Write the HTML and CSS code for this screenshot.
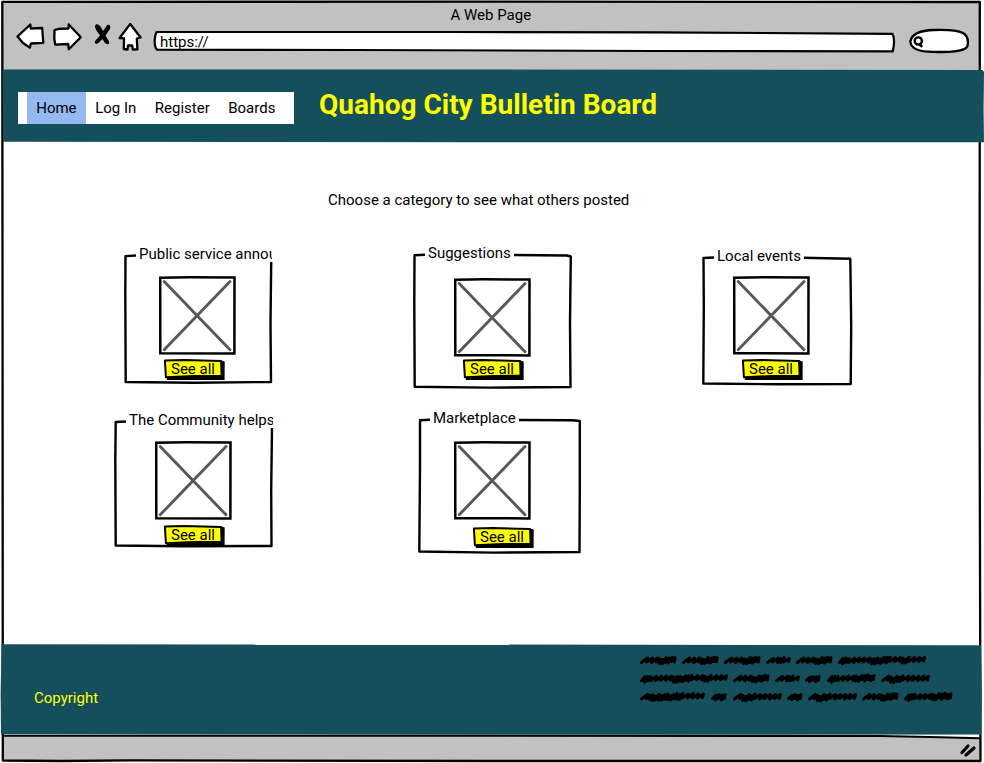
FILE: index.html
```html
<!DOCTYPE html>
<html lang="en">
<head>
<meta charset="utf-8">
<title>A Web Page</title>
<link rel="stylesheet" href="styles.css">
</head>
<body>
<svg class="defs" width="0" height="0">
  <defs>
    <symbol id="picture" viewBox="0 0 77 79">
      <path d="M1.200 1.800 30 1.300 75.500 1.500 75.400 77.400 1.300 77.200Z" fill="#fff" stroke="#000" stroke-width="2.500"/>
      <path d="M5.200 5.500 71 73.800M71 5.500 5.200 73.800" stroke="#58585a" stroke-width="2.900" stroke-linecap="round"/>
    </symbol>
    <symbol id="button" viewBox="0 0 62 22">
      <path d="M3 4 58 1.800 60.700 2.600 60.600 21H2.800Z" fill="#000"/>
      <path d="M.900 1.400 20 1.100 57.100 2.100 57.600 16.700 30 17 1.900 18.300Z" fill="#ff0" stroke="#000" stroke-width="2" stroke-linejoin="round"/>
    </symbol>
    <path id="w15" d="M1.500 6l3.500-3.200-.5 4.600l3.500-5.200-.5 3.800l3.500-3.200-.5 4.600l3.500-5.200-.5 3.800"/>
    <path id="w24" d="M1.500 6.500l6-4.200-1 3.800l6-4-1 4.500l3.500-4-.5 4l3.500-5-.5 4.400l6-3.500-1 3"/>
    <path id="w36" d="M1.500 6.500l6-4.500-1 4l6-4-1 4.500l6-4.500-1 4l3.500-3.200-.5 4.800l3.500-4-.5 4.200l3.500-6.200-.5 5l3.500-4.500-.5 5l3.500-6-.5 4.500l3.500-4-.5 4.300"/>
    <path id="w48a" d="M1.500 6.500l3.500-4-.5 5.500l3.500-6-.5 4.500l3.500-4.300-.5 4l6-4-1 4l6-4.300-1 4.300l6-4.300-1 4l3.500-4-.5 5l3.500-4-.5 4.500l3.500-6-.5 4l3.500-4-.5 5.500l3.500-6-.5 4.500l3.500-3.500-.5 4.500l3.500-5-.5 4"/>
    <path id="w48b" d="M1.500 6.500l6-4.500-1 4l3.500-3-.5 5l3.500-4-.5 4.500l3.500-6.500-.5 5l3.500-4-.5 4.500l3.500-6-.5 4.500l6-4-1 4.500l6-4.500-1 4l6-4-1 4.500l6-4.500-1 4l6-4-1 3.800"/>
    <path id="w65" d="M1.500 6.500l6-4.500-1 4l3.500-3.500-.5 4.500l3.500-4.500-.5 5.500l3.500-4.500-.5 4l3.500-5.500-.5 5.500l3.500-4.500-.5 4.500l3.500-5.500-.5 5l3.500-5.500-.5 5.500l3.500-4-.5 4.500l3.500-5.500-.5 4.500l3.500-5.500-.5 5.500l3.500-4.500-.5 5l3.500-6-.5 4.500l6-4-1 4l6-4.500-1 4.500l6-4-1 4l6-4-1 3.500"/>
    <path id="w87" d="M1.500 6.500l3.500-4-.5 5.500l3.500-6-.5 4.500l3.500-4-.5 4l6-4.500-1 4.500l6-4.500-1 4l6-4-1 4l6-4-1 4l3.500-3-.5 5l3.500-5.500-.5 5.500l3.500-6-.5 5l3.500-4-.5 4.500l3.500-6-.5 4.500l3.500-4.500-.5 5.500l3.500-6-.5 4.500l6-4-1 4l6-4-1 4l3.500-3.500-.5 5l3.500-4-.5 4l3.500-6-.5 4.500l6-4-1 4l6-4-1 4l6-4-1 3.500"/>
  </defs>
</svg>
<div class="window">
  <svg class="frame" width="984" height="763" viewBox="0 0 984 763">
    <path d="M3 2H979.500V70H3Z" fill="#c1c1c1"/>
    <path d="M3 735.500 500 735.800 880 736.300 980 738.500V761H3Z" fill="#c1c1c1"/>
    <path d="M2.800 735.700 500 735.700 880 736 930 737 980 738.200" fill="none" stroke="#000" stroke-width="2"/>
    <path d="M2.300 1.900 500 1.600 979.800 2 979.600 400 980.500 761 500 761 130 760.400 60 761 2.800 760.500 2.600 400Z" fill="none" stroke="#000" stroke-width="2.300" stroke-linejoin="round"/>
    <path d="M962 752.500 968 746M966 755 974 748" stroke="#000" stroke-width="3.200" stroke-linecap="round"/>
  </svg>

  <div class="chrome">
    <div class="page-title">A Web Page</div>
    <div class="toolbar">
      <svg class="controls" width="130" height="32" viewBox="0 0 130 32" fill="#fff" stroke="#000" stroke-width="2.300" stroke-linejoin="round" stroke-linecap="round">
        <path d="M1.500 15.500 14.300 3.500 14.700 7.500 26.200 7 27.300 21.800 15 22.500 13.800 26.600 7 22Z"/>
        <path d="M38.500 9 43 7.800 52.500 7.500 52.800 3.500 64.800 16.200 52.800 28.200 52.200 23 39.300 23.600 38.300 18Z"/>
        <path d="M84.500 5.500C79 0 77 6 82 11.500L84 14.500 79.500 19.500C77.500 22 80 23.800 82.500 22L86.500 18C89 24 94 25 93 20.500L89.500 14.500 94 8C95.500 4 91.500 2.500 90.500 5L87 10Z" fill="#000" stroke="none"/>
        <path d="M114.200 3 124.600 16.500 120.800 17.500 121.400 28.300 116.800 28.500 116.200 24.500 112 24.500 111.500 28.500 107.800 28 108 17.300 103.600 17Z"/>
      </svg>
      <div class="address">
        <svg class="shape" width="742" height="22" viewBox="0 0 742 22"><path d="M2.500 1H300L500 1.300 738.500 2.800C740.500 7 740 15 738.800 20.300L500 20 200 19 3 18.600C0 16 0 6 2.500 1Z" fill="#fff" stroke="#000" stroke-width="2.200" stroke-linejoin="round"/></svg>
        <span>https://</span>
      </div>
      <svg class="search" width="62" height="26" viewBox="0 0 62 26" fill="none" stroke="#000">
        <path d="M2.300 13.500C3.300 7 11 2.500 26 2C43 1.400 50 2.500 55 5C60 8 60.400 14 59.300 18.500C57 23 42 24.500 26 23.800C10 24 2.800 20 2.300 13.500Z" fill="#fff" stroke-width="2.300"/>
        <circle cx="10.300" cy="13" r="3.600" stroke-width="2.400"/>
        <path d="M10.800 15.500 14.200 18.800" stroke-width="2.500"/>
      </svg>
    </div>
  </div>

  <header class="header">
    <svg class="shape" width="984" height="74" viewBox="0 0 984 74"><path d="M2.500.500 500 .500 982.500 1 984 3 983.600 40 984 73.200H500L3 72.700Z" fill="#154f5c"/></svg>
    <nav class="nav">
      <a class="active">Home</a><a>Log In</a><a>Register</a><a>Boards</a>
    </nav>
    <h1>Quahog City Bulletin Board</h1>
  </header>

  <main class="main">
    <p class="prompt">Choose a category to see what others posted</p>
    <div class="cards">
      <section class="card announcements">
        <svg class="shape" width="148" height="141" viewBox="0 0 148 141"><path d="M12 11.500 1.500 12.100 1.300 50 1.700 138 70 138.700 147 138 146.500 80 147.200 18"/></svg>
        <h2>Public service announcements</h2>
        <svg class="picture"><use href="#picture"/></svg>
        <button><svg class="shape" width="62" height="22"><use href="#button"/></svg><span>See all</span></button>
      </section>
      <section class="card suggestions">
        <svg class="shape" width="160" height="147" viewBox="0 0 160 147"><path d="M12 11.700 1.500 12.300 1.300 60 1.700 143.800 75 144.600 157.500 144 157 80 157.800 13.500 154 12.500 100 12"/></svg>
        <h2>Suggestions</h2>
        <svg class="picture"><use href="#picture"/></svg>
        <button><svg class="shape" width="62" height="22"><use href="#button"/></svg><span>See all</span></button>
      </section>
      <section class="card events">
        <svg class="shape" width="151" height="141" viewBox="0 0 151 141"><path d="M12 11.500 1.500 12 1.800 60 1.300 137.500 75 138.300 148.700 138 149.200 80 148.300 12.700 100 11.700"/></svg>
        <h2>Local events</h2>
        <svg class="picture"><use href="#picture"/></svg>
        <button><svg class="shape" width="62" height="22"><use href="#button"/></svg><span>See all</span></button>
      </section>
      <section class="card community">
        <svg class="shape" width="160" height="140" viewBox="0 0 160 140"><path d="M12 11.500 1.700 12 1.300 50 1.700 135.500 70 136.300 157.500 136 157.200 80 158 18"/></svg>
        <h2>The Community helps out</h2>
        <svg class="picture"><use href="#picture"/></svg>
        <button><svg class="shape" width="62" height="22"><use href="#button"/></svg><span>See all</span></button>
      </section>
      <section class="card marketplace">
        <svg class="shape" width="164" height="147" viewBox="0 0 164 147"><path d="M12 11.700 2 12.300 2 60 1.300 143.500 75 144.600 161.500 144 161.800 80 161.800 13 154 12.300 98 12"/></svg>
        <h2>Marketplace</h2>
        <svg class="picture"><use href="#picture"/></svg>
        <button><svg class="shape" width="62" height="22"><use href="#button"/></svg><span>See all</span></button>
      </section>
    </div>
  </main>

  <footer class="footer">
    <svg class="shape" width="984" height="92" viewBox="0 0 984 92"><path d="M1.500 .300 500 .500 981 1.200 981.800 50 981.200 90.500 500 90.800 1 90.300 .600 50Z" fill="#154f5c"/></svg>
    <span class="copyright">Copyright</span>
    <svg class="scribble" width="316" height="48" viewBox="0 0 316 48" fill="none" stroke="#000" stroke-width="3" stroke-linejoin="round" stroke-linecap="round">
      <use href="#w36" x="0"/><use href="#w36" x="42"/><use href="#w36" x="84"/><use href="#w24" x="126"/><use href="#w36" x="156"/><use href="#w87" x="198"/>
      <use href="#w87" x="0" y="18.200"/><use href="#w36" x="93" y="18.200"/><use href="#w24" x="135" y="18.200"/><use href="#w15" x="165" y="18.200"/><use href="#w48a" x="187" y="18.200"/><use href="#w48b" x="241" y="18.200"/>
      <use href="#w65" x="0" y="36.500"/><use href="#w15" x="71" y="36.500"/><use href="#w48b" x="93" y="36.500"/><use href="#w15" x="147" y="36.500"/><use href="#w48b" x="168" y="36.500"/><use href="#w36" x="222" y="36.500"/><use href="#w48a" x="264" y="36.500"/>
    </svg>
  </footer>
</div>
</body>
</html>
```
FILE: styles.css
```css
* { box-sizing: border-box; }

body {
  margin: 0;
  background: #fff;
  color: #000;
  font: 15px/18px Roboto, sans-serif;
  overflow: hidden;
}

svg { display: block; }
.defs { position: absolute; }

.window {
  position: relative;
  display: grid;
  grid-template-rows: 69px 73px 502px 92px 27px;
  width: 984px;
  height: 763px;
  isolation: isolate;
}

.frame { position: absolute; inset: 0; z-index: -1; }
.shape { position: absolute; top: 0; left: 0; z-index: -1; overflow: visible; }

.page-title { padding: 6px 0 0 450.5px; }
.toolbar { display: flex; align-items: flex-start; padding-left: 16px; }
.controls { margin-top: -3px; }
.address {
  position: relative;
  isolation: isolate;
  width: 742px;
  height: 22px;
  margin: 7px 0 0 8px;
  padding: 2px 0 0 6px;
}
.search { margin: 4px 0 0 12px; }

.header {
  position: relative;
  isolation: isolate;
  display: flex;
  align-items: flex-start;
  padding: 23px 0 0 18px;
}
.nav {
  display: flex;
  width: 276px;
  height: 32px;
  padding-left: 9px;
  background: #fff;
  line-height: 32px;
}
.nav a { padding: 0 9.25px 0 9.2px; }
.nav .active { width: 59px; background: #94b9f1; }
h1 {
  margin: -4px 0 0 25px;
  color: #ff0;
  font-size: 28px;
  line-height: 33px;
  font-weight: 700;
  white-space: nowrap;
}

.prompt { margin: 0; padding: 49px 0 0 328px; }

.cards {
  display: grid;
  grid-template-columns: 289px 289px 165px;
  grid-template-rows: 165px 150px;
  padding: 34px 0 0 124px;
}
.card {
  position: relative;
  isolation: isolate;
  display: flex;
  flex-direction: column;
  align-items: flex-start;
}
.card > .shape { fill: none; stroke: #000; stroke-width: 2.4; stroke-linejoin: round; }
.card h2 {
  max-width: calc(100% - 12px);
  height: 18px;
  margin: 0 0 0 12px;
  padding: 0 3px;
  overflow: hidden;
  background: #fff;
  font-size: 15px;
  font-weight: 400;
  line-height: 21px;
  white-space: nowrap;
}
.picture { width: 77px; height: 79px; flex: none; }

button {
  position: relative;
  isolation: isolate;
  width: 62px;
  height: 22px;
  border: 0;
  padding: 0 0 2px 7px;
  background: none;
  color: #000;
  font: inherit;
  text-align: left;
}

.announcements { width: 148px; margin-top: 1px; }
.announcements .picture { margin: 14px 0 0 35px; }
.announcements button { margin: 4px 0 0 40px; }

.suggestions { width: 160px; }
.suggestions .picture { margin: 17px 0 0 41px; }
.suggestions button { margin: 2px 0 0 50px; }

.events { width: 151px; margin-top: 3px; }
.events .picture { margin: 12px 0 0 31px; }
.events button { margin: 4px 0 0 40px; }

.community { width: 160px; margin: 2px 0 0 -10px; }
.community h2 { max-width: 147px; }
.community .picture { margin: 13px 0 0 41px; }
.community button { margin: 5px 0 0 50px; }

.marketplace { width: 164px; margin-left: 5px; }
.marketplace .picture { margin: 15px 0 0 36px; }
.marketplace button { margin: 7px 0 0 55px; }

.footer {
  position: relative;
  isolation: isolate;
  display: flex;
  justify-content: space-between;
  align-items: flex-start;
  padding: 12px 28px 0 34px;
  color: #ff0;
}
.copyright { margin-top: 33px; }
```
